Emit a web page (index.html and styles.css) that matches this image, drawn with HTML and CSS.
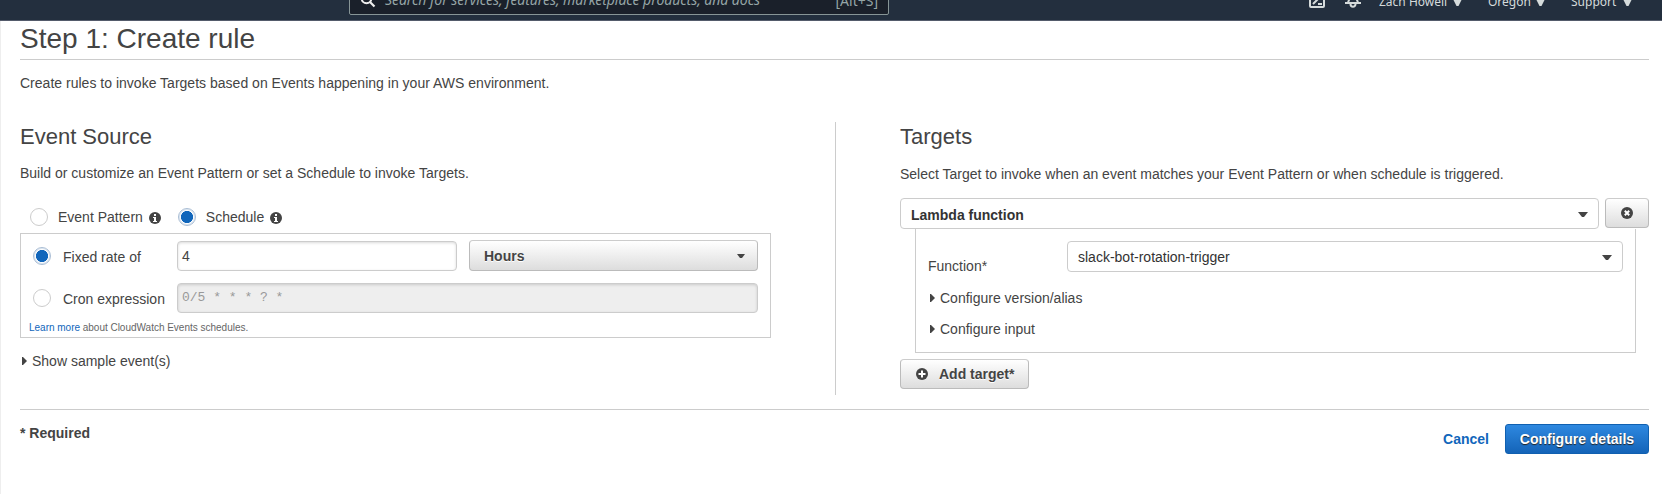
FILE: index.html
```html
<!DOCTYPE html>
<html lang="en">
<head>
<meta charset="utf-8">
<title>Step 1: Create rule</title>
<link rel="stylesheet" href="styles.css">
</head>
<body>
<header class="topbar">
  <div class="search">
    <svg class="search-icon" width="16" height="16" viewBox="0 0 16 16"><circle cx="6.500" cy="6.500" r="4.800" fill="none" stroke="#eee" stroke-width="2"/><path d="M10 10l4.500 4.500" stroke="#eee" stroke-width="2.200"/></svg>
    <span class="search-text">Search for services, features, marketplace products, and docs</span>
    <span class="search-key">[Alt+S]</span>
  </div>
  <nav class="nav">
    <svg class="nav-shell" width="16" height="16" viewBox="0 0 16 16" fill="none" stroke="#d5dbdb" stroke-width="2"><rect x="1" y="1" width="14" height="14" rx="1"/><path d="M4 3l4.500 4.500L4 12M9 12h4"/></svg>
    <svg class="nav-bell" width="16" height="16" viewBox="0 0 16 16" fill="none" stroke="#d5dbdb" stroke-width="2"><path d="M0 11h16M3 10.500L4 8V5a4 4 0 0 1 8 0v3l1 2.500"/><path d="M5.500 12a2.500 2.800 0 0 0 5 0"/></svg>
    <span class="nav-item nav-user">Zach Howell</span><svg class="nav-arrow" width="9" height="7" viewBox="0 0 9 7"><path d="M0 0h9L5.500 7h-2z" fill="#d5dbdb"/></svg>
    <span class="nav-item nav-region">Oregon</span><svg class="nav-arrow" width="9" height="7" viewBox="0 0 9 7"><path d="M0 0h9L5.500 7h-2z" fill="#d5dbdb"/></svg>
    <span class="nav-item nav-support">Support</span><svg class="nav-arrow" width="9" height="7" viewBox="0 0 9 7"><path d="M0 0h9L5.500 7h-2z" fill="#d5dbdb"/></svg>
  </nav>
</header>
<main class="page">
  <h1 class="title">Step 1: Create rule</h1>
  <p class="intro">Create rules to invoke Targets based on Events happening in your AWS environment.</p>
  <div class="columns">
    <section class="source">
      <h2 class="heading">Event Source</h2>
      <p class="lead">Build or customize an Event Pattern or set a Schedule to invoke Targets.</p>
      <div class="kinds">
        <span class="radio"></span><span class="kind-label">Event Pattern</span>
        <svg class="info" width="12" height="12" viewBox="0 0 12 12"><circle cx="6" cy="6" r="6" fill="#444"/><path d="M5 2h2v2H5zM4 5h3v4h1v1H4V9h1V6H4z" fill="#fff"/></svg>
        <span class="radio radio-on kind-second"></span><span class="kind-label">Schedule</span>
        <svg class="info" width="12" height="12" viewBox="0 0 12 12"><circle cx="6" cy="6" r="6" fill="#444"/><path d="M5 2h2v2H5zM4 5h3v4h1v1H4V9h1V6H4z" fill="#fff"/></svg>
      </div>
      <div class="schedule">
        <div class="row">
          <span class="radio radio-on"></span><span class="row-label">Fixed rate of</span>
          <div class="field rate">4</div>
          <div class="button unit">Hours<svg width="8" height="4" viewBox="0 0 8 4"><path d="M0 0h8L5 4H3z" fill="#444"/></svg></div>
        </div>
        <div class="row row-cron">
          <span class="radio"></span><span class="row-label">Cron expression</span>
          <div class="field cron">0/5 * * * ? *</div>
        </div>
        <p class="note"><a class="link">Learn more</a> about CloudWatch Events schedules.</p>
      </div>
      <div class="toggle sample"><svg width="5" height="8" viewBox="0 0 5 8"><path d="M0 0h1l4 4-4 4H0z" fill="#444"/></svg>Show sample event(s)</div>
    </section>
    <section class="targets">
      <h2 class="heading">Targets</h2>
      <p class="lead lead-targets">Select Target to invoke when an event matches your Event Pattern or when schedule is triggered.</p>
      <div class="target-head">
        <div class="select select-type">Lambda function<svg width="10" height="5" viewBox="0 0 10 5"><path d="M0 0h10L6 5H4z" fill="#444"/></svg></div>
        <div class="button remove"><svg width="12" height="12" viewBox="0 0 12 12"><circle cx="6" cy="6" r="6" fill="#444"/><path d="M3.800 3.800l4.400 4.400M8.200 3.800L3.800 8.200" stroke="#fff" stroke-width="2"/></svg></div>
      </div>
      <div class="panel">
        <div class="function-row">
          <span class="function-label">Function*</span>
          <div class="select select-function">slack-bot-rotation-trigger<svg width="10" height="5" viewBox="0 0 10 5"><path d="M0 0h10L6 5H4z" fill="#444"/></svg></div>
        </div>
        <div class="toggle version"><svg width="5" height="8" viewBox="0 0 5 8"><path d="M0 0h1l4 4-4 4H0z" fill="#444"/></svg>Configure version/alias</div>
        <div class="toggle input"><svg width="5" height="8" viewBox="0 0 5 8"><path d="M0 0h1l4 4-4 4H0z" fill="#444"/></svg>Configure input</div>
      </div>
      <div class="button add"><svg width="12" height="12" viewBox="0 0 12 12"><circle cx="6" cy="6" r="6" fill="#444"/><path d="M6 2.500v7M2.500 6h7" stroke="#fff" stroke-width="2"/></svg>Add target*</div>
    </section>
  </div>
  <footer class="footer">
    <span class="required">* Required</span>
    <span class="cancel">Cancel</span>
    <div class="primary">Configure details</div>
  </footer>
</main>
</body>
</html>
```

FILE: styles.css
```css
* { box-sizing: border-box; }
body {
  margin: 0;
  height: 494px;
  overflow: hidden;
  background: #fff;
  color: #444;
  font: 14px/20px "Liberation Sans", Arial, sans-serif;
}
svg { display: block; flex: none; }

.topbar {
  display: flex;
  align-items: flex-end;
  height: 21px;
  overflow: hidden;
  background: #232f3e;
  border-bottom: 1px solid #545b6b;
  font-family: "Noto Sans", sans-serif;
}
.search {
  display: flex;
  align-items: center;
  flex: none;
  width: 540px;
  height: 32px;
  margin: 0 0 5px 349px;
  padding: 0 10px;
  border: 1px solid #879596;
  border-radius: 2px;
  background: #1a202a;
  color: #95a5a6;
}
.search-icon { margin-top: 1px; }
.search-text { margin: 2px 0 0 9px; font-style: italic; letter-spacing: -0.06px; white-space: nowrap; }
.search-key { margin: 3px 0 0 auto; }
.nav {
  display: flex;
  align-items: center;
  flex: none;
  height: 40px;
  margin-left: 420px;
  font-size: 12px;
  color: #d5dbdb;
}
.nav-bell { margin-left: 20px; }
.nav-item { padding-top: 3px; white-space: nowrap; }
.nav-user { width: 66px; margin-left: 18px; }
.nav-region { width: 40px; margin-left: 26px; }
.nav-support { width: 44px; margin-left: 26px; }
.nav-arrow { margin: 4px 0 0 8px; }

.page {
  height: 473px;
  padding: 0 13px 0 19px;
  border-left: 1px solid #eee;
}
.title {
  height: 39px;
  margin: 0;
  border-bottom: 1px solid #ccc;
  font-size: 28px;
  font-weight: 400;
  line-height: 36px;
}
.intro { margin: 13px 0 29px; letter-spacing: 0.012px; }
.columns { display: flex; height: 273px; }
.source { width: 816px; border-right: 1px solid #ccc; }
.targets { flex: 1; padding-left: 64px; }
.heading { height: 28px; margin: 0; font-size: 22px; font-weight: 400; line-height: 30px; }
.lead { margin: 13px 0 0; }
.lead-targets { margin-top: 14px; }

.radio {
  flex: none;
  width: 18px;
  height: 18px;
  border: 1px solid #ccc;
  border-radius: 50%;
  background: #fff;
}
.radio-on {
  border: 1px solid #a9bdd4;
  box-shadow: inset 0 0 0 1px #dbe5f0;
  background: radial-gradient(circle, #1166bb 5.700px, #fff 6.400px);
}
.kinds { display: flex; align-items: center; height: 20px; margin-top: 24px; padding-left: 10px; }
.kind-label { margin-left: 10px; }
.info { margin: 2px 0 0 6px; }
.kind-second { margin-left: 17px; }

.schedule { width: 751px; height: 105px; margin-top: 6px; padding: 6px 12px 0; border: 1px solid #ccc; }
.row { display: flex; align-items: center; height: 31px; }
.row-label { width: 114px; margin-left: 12px; padding-top: 2px; white-space: nowrap; }
.field {
  height: 30px;
  padding: 0 4px;
  border: 1px solid #ccc;
  border-radius: 4px;
  box-shadow: inset 0 1px 3px rgba(0, 0, 0, 0.15);
  line-height: 28px;
}
.rate { width: 280px; margin: 1px 12px 0 0; font-size: 14px; }
.row-cron { height: 30px; margin-top: 12px; }
.cron {
  flex: 1;
  background: #eee;
  color: #999;
  font: 13px/27px "Liberation Mono", monospace;
}
.button {
  display: flex;
  align-items: center;
  height: 30px;
  border: 1px solid #bbb;
  border-top-color: #ccc;
  border-radius: 4px;
  background: linear-gradient(#fff, #ddd);
  font-weight: 700;
  text-shadow: 0 1px 0 #fff;
}
.unit { flex: 1; justify-content: space-between; height: 31px; padding: 0 12px 0 14px; }
.note { margin: 9px 0 0 -4px; color: #666; font-size: 10px; line-height: 12px; word-spacing: -0.1px; }
.link { color: #1166bb; }

.toggle { display: flex; align-items: center; gap: 5px; }
.sample { margin: 13px 0 0 2px; }

.target-head { display: flex; gap: 6px; margin-top: 14px; }
.select {
  display: flex;
  align-items: center;
  justify-content: space-between;
  height: 31px;
  padding: 0 10px;
  border: 1px solid #ccc;
  border-radius: 4px;
  background: #fff;
  color: #333;
}
.select-type { flex: 1; padding-top: 2px; font-weight: 700; }
.remove { width: 44px; justify-content: center; }
.panel {
  height: 124px;
  margin: 0 13px 0 15px;
  padding: 12px 12px 0;
  border: 1px solid #ccc;
  border-top: 0;
}
.function-row { display: flex; }
.function-label { width: 139px; padding-top: 15px; }
.select-function { flex: 1; padding-top: 1px; }
.version { margin: 12px 0 0 2px; }
.input { margin: 11px 0 0 2px; }
.add { width: 129px; margin-top: 6px; padding-left: 15px; gap: 11px; }

.footer { display: flex; height: 60px; margin-top: 14px; border-top: 1px solid #ccc; font-weight: 700; }
.required { margin-top: 13px; }
.cancel { margin: 19px 16px 0 auto; color: #1166bb; }
.primary {
  width: 144px;
  height: 30px;
  margin-top: 14px;
  border: 1px solid #1060b0;
  border-radius: 3px;
  background: linear-gradient(#2e88e0, #1464b8);
  color: #fff;
  line-height: 29px;
  text-align: center;
  text-shadow: 0 1px 1px #222;
}
```
